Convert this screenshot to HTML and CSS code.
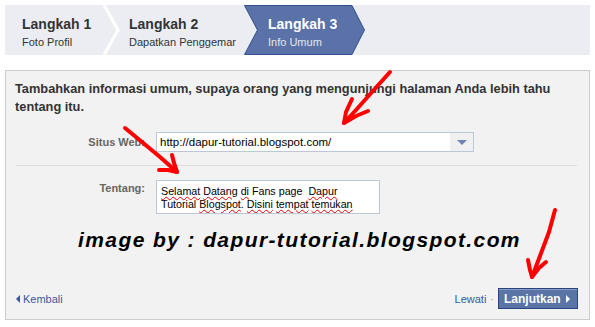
FILE: index.html
```html
<!DOCTYPE html>
<html lang="id">
<head>
    <meta charset="UTF-8">
    <meta name="viewport" content="width=device-width, initial-scale=1.0">
    <title>Info Umum</title>
    <link rel="stylesheet" href="styles.css">
</head>
<body>
    <div class="steps">
        <div class="step step-first">
            <div class="step-title">Langkah 1</div>
            <div class="step-sub">Foto Profil</div>
        </div>
        <div class="step-sep">
            <svg width="17" height="50" viewBox="0 0 17 50"><polyline points="1,0 15,25 1,50" fill="none" stroke="#fff" stroke-width="3"/></svg>
        </div>
        <div class="step step-second">
            <div class="step-title">Langkah 2</div>
            <div class="step-sub">Dapatkan Penggemar</div>
        </div>
        <div class="step step-current">
            <div class="step-title">Langkah 3</div>
            <div class="step-sub">Info Umum</div>
        </div>
    </div>

    <div class="panel">
        <p class="intro">Tambahkan informasi umum, supaya orang yang mengunjungi halaman Anda lebih tahu tentang itu.</p>

        <div class="form-row row-web">
            <div class="field-label">Situs Web:</div>
            <div class="select">
                <div class="select-value">http://dapur-tutorial.blogspot.com/</div>
                <div class="select-btn"><span class="select-arrow"></span></div>
            </div>
        </div>

        <hr class="divider">

        <div class="form-row row-about">
            <div class="field-label">Tentang:</div>
            <div class="about-box"><span class="typo">Selamat</span> <span class="typo">Datang</span> <span class="typo">di</span> Fans page  <span class="typo">Dapur</span>
Tutorial <span class="typo">Blogspot</span>. <span class="typo">Disini</span> <span class="typo">tempat</span> <span class="typo">temukan</span></div>
        </div>

        <div class="credit">image by : dapur-tutorial.blogspot.com</div>

        <div class="footer">
            <a class="back"><span class="back-arrow"></span>Kembali</a>
            <div class="actions">
                <a class="skip">Lewati</a>
                <span class="sep-dot">·</span>
                <button class="btn-next">Lanjutkan <span class="next-arrow"></span></button>
            </div>
        </div>
    </div>

    <!-- hand drawn red arrows on top of the screenshot -->
    <svg class="annotations" width="595" height="327" viewBox="0 0 595 327">
        <g fill="none" stroke="#f00" stroke-width="4" stroke-linecap="round" stroke-linejoin="round">
            <polyline points="390,72 372,92 356,110 344,123"/>
            <polyline points="352,99 346,112 344,123 356,116 368,111"/>
            <polyline points="125,128 142,142 160,157 177,172"/>
            <polyline points="159,170 168,170 177,172 174,163 172,155"/>
            <polyline points="555,210 549,232 540,256 532,277"/>
            <polyline points="528,260 530,270 532,277 539,268 546,262"/>
        </g>
    </svg>
</body>
</html>
```

FILE: styles.css
```css
body {
    margin: 0;
    width: 595px;
    height: 327px;
    position: relative;
    overflow: hidden;
    background: #fff;
    color: #333;
    font-family: "Liberation Sans", Arial, sans-serif;
}

/* step bar */
.steps {
    display: flex;
    height: 50px;
    margin: 5px 5px 0;
    background: #ecedf2;
}
.step {
    box-sizing: border-box;
    padding-top: 11px;
}
.step-title {
    font-size: 14px;
    font-weight: bold;
    line-height: 16px;
}
.step-sub {
    font-size: 11px;
    line-height: 14px;
    margin-top: 3px;
}
.step-first {
    width: 98px;
    padding-left: 17px;
}
.step-sep {
    width: 17px;
    height: 50px;
}
.step-sep svg {
    display: block;
}
.step-second {
    width: 124px;
    padding-left: 9px;
}
.step-current {
    width: 122px;
    padding-left: 24px;
    color: #fff;
    background: url("data:image/svg+xml,%3Csvg xmlns='http://www.w3.org/2000/svg' width='122' height='50'%3E%3Cpolygon points='0.5,0.5 108,0.5 120.5,25 108,49.5 0.5,49.5 13.5,25' fill='%235a72a7' stroke='%2333508f'/%3E%3C/svg%3E") no-repeat;
}
.step-current .step-sub {
    color: #e3e8f2;
}

/* main panel */
.panel {
    box-sizing: border-box;
    height: 250px;
    margin: 15px 5px 0;
    padding: 9px 11px 9px 9px;
    border: 1px solid #ccc;
    background: #f2f2f2;
}
.intro {
    margin: 0;
    font-size: 12.8px;
    font-weight: bold;
    line-height: 18px;
    color: #333;
}
.form-row {
    display: grid;
    grid-template-columns: 130px auto;
    column-gap: 11px;
    align-items: start;
}
.field-label {
    text-align: right;
    font-size: 11px;
    font-weight: bold;
    color: #666;
}
.row-web {
    margin-top: 16px;
}
.row-web .field-label {
    line-height: 20px;
}
.select {
    display: flex;
    box-sizing: border-box;
    width: 318px;
    height: 20px;
    border: 1px solid #bdc7d8;
    background: #fff;
}
.select-value {
    flex: 1;
    padding-left: 3px;
    font-size: 11.5px;
    line-height: 18px;
    color: #000;
}
.select-btn {
    width: 23px;
    display: flex;
    align-items: center;
    justify-content: center;
    background: #f0f0f0;
}
.select-arrow {
    width: 0;
    height: 0;
    border-top: 5px solid #6d84b4;
    border-left: 5px solid transparent;
    border-right: 5px solid transparent;
}
.divider {
    height: 0;
    margin: 13px 1px 0;
    border: 0;
    border-top: 1px solid #ddd;
}
.row-about {
    margin-top: 14px;
}
.row-about .field-label {
    padding-top: 1px;
    line-height: 14px;
}
.about-box {
    box-sizing: border-box;
    width: 224px;
    height: 34px;
    padding: 4px;
    border: 1px solid #bdc7d8;
    background: #fff;
    font-size: 10.7px;
    line-height: 13px;
    color: #000;
    white-space: pre;
    overflow: hidden;
}
.typo {
    text-decoration: underline wavy #e00;
    text-decoration-thickness: 1px;
    text-underline-offset: 1px;
}
.credit {
    margin-top: 14px;
    padding-left: 6px;
    text-align: center;
    font-size: 21px;
    font-style: italic;
    font-weight: bold;
    letter-spacing: 1.4px;
    line-height: 24px;
    color: #000;
}

/* footer links and button */
.footer {
    display: flex;
    align-items: center;
    justify-content: space-between;
    margin-top: 36px;
}
.back, .skip {
    color: #3b5998;
    font-size: 11px;
}
.back {
    display: flex;
    align-items: center;
    gap: 3px;
    margin-left: 1px;
}
.back-arrow {
    width: 0;
    height: 0;
    border-right: 4px solid #3b5998;
    border-top: 4px solid transparent;
    border-bottom: 4px solid transparent;
}
.actions {
    display: flex;
    align-items: center;
}
.sep-dot {
    margin: 0 4px;
    font-size: 11px;
    color: #999;
}
.btn-next {
    display: flex;
    align-items: center;
    gap: 5px;
    box-sizing: border-box;
    width: 80px;
    height: 21px;
    padding: 0 5px;
    border: 1px solid #29447e;
    background: #5b74a8;
    box-shadow: inset 0 1px 0 #8a9cc2;
    color: #fff;
    font-family: "Liberation Sans", Arial, sans-serif;
    font-size: 12px;
    font-weight: bold;
}
.next-arrow {
    width: 0;
    height: 0;
    border-left: 4px solid #fff;
    border-top: 4px solid transparent;
    border-bottom: 4px solid transparent;
}

.annotations {
    position: absolute;
    left: 0;
    top: 0;
    pointer-events: none;
}
```
